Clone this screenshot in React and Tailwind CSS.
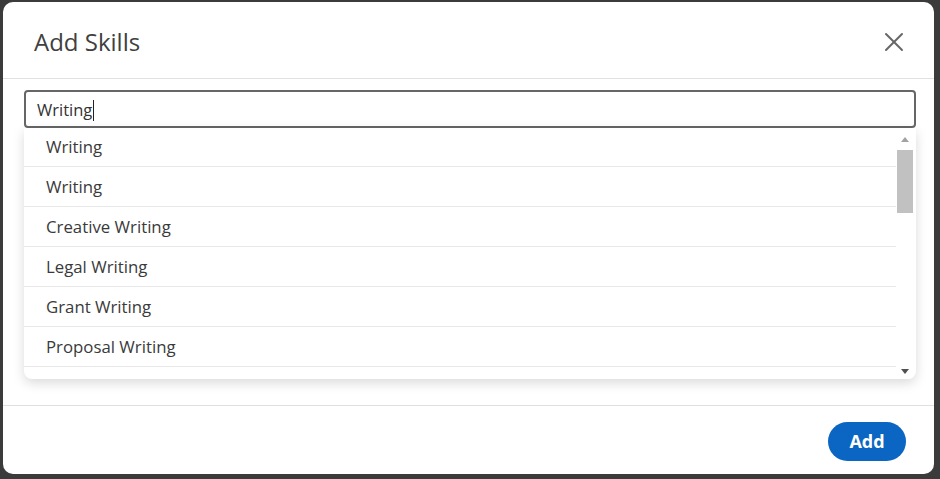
import { X } from "lucide-react";

const skills = [
  "Writing",
  "Writing",
  "Creative Writing",
  "Legal Writing",
  "Grant Writing",
  "Proposal Writing",
];

function Scrollbar() {
  return (
    <div className="flex w-[18px] flex-col items-center bg-white">
      <div className="flex h-[22px] items-center justify-center">
        <svg width="8" height="5" viewBox="0 0 8 5">
          <path d="M0 5 L4 0 L8 5 Z" fill="#a3a3a3" />
        </svg>
      </div>
      <div className="h-[63px] w-[16px] bg-[#c1c1c1]" />
      <div className="flex-1" />
      <div className="flex h-[16px] items-center justify-center">
        <svg width="8" height="5" viewBox="0 0 8 5">
          <path d="M0 0 L8 0 L4 5 Z" fill="#505050" />
        </svg>
      </div>
    </div>
  );
}

export default function App() {
  return (
    <div
      className="h-[479px] w-[940px] bg-[#3b3b3b] pt-[2px] pl-[3px]"
      style={{ fontFamily: '"Open Sans", "Noto Sans", sans-serif' }}
    >
      <div className="flex h-[472px] w-[931px] flex-col overflow-hidden rounded-[10px] bg-white">
        <header className="flex h-[77px] items-center justify-between border-b border-[#e0e0e0] pt-[3px] pl-[31px] pr-[24px]">
          <h2 className="text-[24px] text-[#404040]">Add Skills</h2>
          <X size={32} strokeWidth={1.5} color="#666666" />
        </header>

        <div className="relative h-[326px] pt-[11px] pl-[21px] pr-[18px]">
          <div className="flex h-[38px] items-center rounded-[4px] border-2 border-[#666666] pl-[11px] pt-[2px]">
            <span className="text-[16.5px] text-[#333333]">Writing</span>
            <span className="ml-[1px] h-[21px] w-[1px] bg-[#222222]" />
          </div>

          <div className="absolute left-[21px] right-[18px] top-[49px] flex h-[251px] overflow-hidden rounded-b-[8px] bg-white shadow-[0_4px_12px_rgba(0,0,0,0.15)]">
            <ul className="flex-1 overflow-hidden">
              {skills.map((skill, i) => (
                <li
                  key={i}
                  className={`flex items-center border-b border-[#e8e8e8] pl-[22px] text-[16.8px] text-[#3a3a3a] ${
                    i === 0 ? "h-[39px]" : "h-[40px]"
                  }`}
                >
                  {skill}
                </li>
              ))}
            </ul>
            <Scrollbar />
            <div className="w-[2px]" />
          </div>
        </div>

        <footer className="flex flex-1 items-center justify-end border-t border-[#e0e0e0] pt-[2px] pr-[28px]">
          <button
            type="button"
            className="h-[39px] w-[78px] rounded-full bg-[#0a66c2] text-[18px] font-bold text-white"
          >
            Add
          </button>
        </footer>
      </div>
    </div>
  );
}
